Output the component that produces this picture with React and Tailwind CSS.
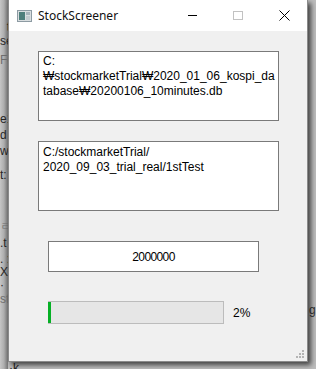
const leftFragments = [
  { h: 20, t: '' },
  { h: 13, t: '_t' },
  { h: 14, t: 'se' },
  { h: 19, t: 'Fo', light: true },
  { h: 42, t: '' },
  { h: 17, t: 'e1' },
  { h: 16, t: 'd_' },
  { h: 16, t: 'wi' },
  { h: 24, t: 't:' },
  { h: 51, t: 'ㄹ', light: true },
  { h: 17, t: '.t' },
  { h: 16, t: '. :' },
  { h: 13, t: 'X(' },
  { h: 13, t: '·' },
  { h: 14, t: 'st', light: true },
]

const WindowIcon = () => (
  <svg width="15" height="12" viewBox="0 0 15 12">
    <rect x="0.5" y="0.5" width="14" height="11" fill="#d9dee0" stroke="#8d9ba3" />
    <rect x="2" y="2" width="6" height="8" fill="#4f7f7c" />
    <rect x="9" y="2" width="4" height="3" fill="#a7b4bb" />
    <rect x="9" y="6" width="4" height="4" fill="#c4ccd0" />
  </svg>
)

const Grip = () => (
  <svg width="8" height="8" viewBox="0 0 8 8" fill="#b4b4b4">
    <rect x="6" y="0" width="2" height="2" />
    <rect x="3" y="3" width="2" height="2" />
    <rect x="6" y="3" width="2" height="2" />
    <rect x="0" y="6" width="2" height="2" />
    <rect x="3" y="6" width="2" height="2" />
    <rect x="6" y="6" width="2" height="2" />
  </svg>
)

export default function App() {
  const percent = 2

  return (
    <div className="w-[316px] h-[369px] overflow-hidden flex bg-[#bdbdbd] font-['Liberation_Sans',sans-serif] text-black">
      {/* background app peeking out on the left */}
      <div className="w-[8px] h-full shrink-0 flex flex-col overflow-hidden bg-gradient-to-r from-[#c6c6c6] via-[#adadad] to-[#767676] text-[12px] leading-none">
        {leftFragments.map((f, i) => (
          <div
            key={i}
            className={`whitespace-nowrap overflow-hidden flex items-end ${f.light ? 'text-[#6e6e6e]' : 'text-[#262626]'}`}
            style={{ height: f.h }}
          >
            {f.t}
          </div>
        ))}
      </div>

      <div className="w-[300px] shrink-0 flex flex-col">
        <div className="relative z-10 h-[362px] flex flex-col bg-[#f0f0f0] border border-[#8a8a8a] border-t-0 shadow-[3px_3px_5px_rgba(0,0,0,0.65)]">
          {/* title bar */}
          <div className="h-[31px] bg-white flex items-center shrink-0">
            <div className="ml-[8px] mt-px">
              <WindowIcon />
            </div>
            <span className="ml-[6px] text-[12px] font-['Noto_Sans',sans-serif] text-[#111]">StockScreener</span>
            <div className="ml-auto flex items-center h-full">
              <div className="w-[46px] h-full flex items-center justify-center">
                <div className="w-[9px] h-px bg-black" />
              </div>
              <div className="w-[46px] h-full flex items-center justify-center">
                <div className="w-[10px] h-[9px] border border-[#c2c2c2]" />
              </div>
              <div className="w-[46px] h-full flex items-center justify-center">
                <svg width="11" height="11" viewBox="0 0 11 11" stroke="#000" strokeWidth="1">
                  <path d="M0.5 0.5 L10.5 10.5 M10.5 0.5 L0.5 10.5" />
                </svg>
              </div>
            </div>
          </div>

          {/* content */}
          <div className="flex-1 flex flex-col pt-[20px] text-[12px]">
            <div className="ml-[29px] w-[241px] h-[70px] bg-white border border-[#7a7a7a] pl-[4px] pt-[2px] leading-[15px]">
              <div>C:</div>
              <div className="whitespace-nowrap">₩stockmarketTrial₩2020_01_06_kospi_da</div>
              <div className="whitespace-nowrap">tabase₩20200106_10minutes.db</div>
            </div>

            <div className="mt-[20px] ml-[29px] w-[241px] h-[70px] bg-white border border-[#7a7a7a] pl-[4px] pt-[3px] leading-[15px]">
              <div>C:/stockmarketTrial/</div>
              <div>2020_09_03_trial_real/1stTest</div>
            </div>

            <div className="mt-[30px] ml-[39px] w-[211px] h-[31px] bg-white border border-[#7a7a7a] flex items-center justify-center">
              <span className="text-[12px] tracking-[-0.6px]">2000000</span>
            </div>

            <div className="mt-[29px] ml-[39px] flex items-center">
              <div className="w-[176px] h-[23px] flex bg-[#e6e6e6] border border-[#bcbcbc]">
                <div className="h-full bg-[#06b025] -ml-px" style={{ width: Math.max(3, (174 * percent) / 100 - 1) }} />
              </div>
              <span className="ml-[9px] text-[12px]">{percent}%</span>
            </div>

            <div className="mt-auto self-end mr-[3px] mb-[3px]">
              <Grip />
            </div>
          </div>
        </div>
        <div className="flex-1 text-[12px] leading-none text-[#222] pl-px overflow-hidden">·k</div>
      </div>

      <div className="flex-1 flex flex-col justify-end pb-[50px] text-[12px] text-[#333] overflow-hidden">
        <span className="pl-[1px]">g</span>
      </div>
    </div>
  )
}
